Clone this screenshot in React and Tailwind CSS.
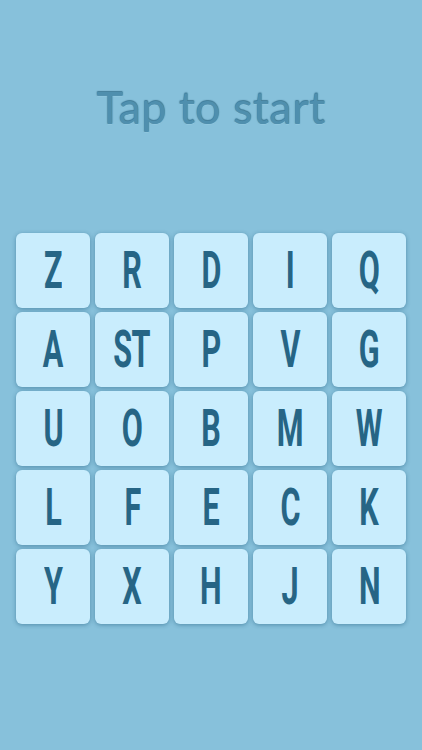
const rows = [
  ["Z", "R", "D", "I", "Q"],
  ["A", "ST", "P", "V", "G"],
  ["U", "O", "B", "M", "W"],
  ["L", "F", "E", "C", "K"],
  ["Y", "X", "H", "J", "N"],
];

export default function App() {
  return (
    <div className="w-[422px] h-[750px] bg-[#87c1db] flex flex-col items-center overflow-hidden">
      <div
        className="mt-[81px] h-[52px] text-[45px] leading-[52px] text-[#4f8fae] font-normal tracking-[0.4px]"
        style={{ fontFamily: "Lato, 'Open Sans', sans-serif", textShadow: "0 -1px 1px rgba(30,90,120,0.65), 0 0 1px rgba(40,100,130,0.5), 0 1px 0 rgba(180,225,245,0.35)" }}
      >
        Tap to start
      </div>
      <div className="mt-[100px] grid grid-cols-[repeat(5,74px)] gap-x-[5px] gap-y-[4px]">
        {rows.flat().map((l, i) => (
          <div
            key={i}
            className="h-[75px] rounded-[6px] bg-[#c9edfd] shadow-[0_1px_4px_rgba(20,80,115,0.45)] flex items-center justify-center text-[#266585]"
          >
            <span
              className="inline-block text-[51px] leading-none font-bold scale-x-[0.6] tracking-[-1px]"
              style={{ fontFamily: "Roboto, 'Liberation Sans', sans-serif" }}
            >
              {l}
            </span>
          </div>
        ))}
      </div>
    </div>
  );
}
